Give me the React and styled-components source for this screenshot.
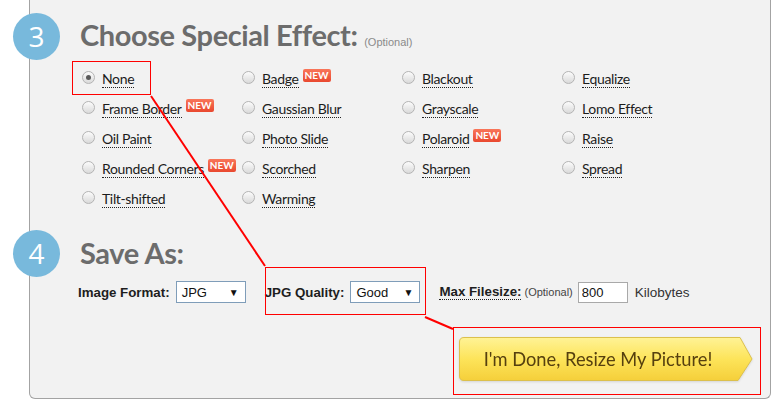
import React from "react";
import styled, { createGlobalStyle } from "styled-components";

const GlobalStyle = createGlobalStyle`
  html, body {
    margin: 0;
    padding: 0;
    background: #ffffff;
  }
  body {
    font-family: "Liberation Sans", Arial, sans-serif;
    width: 779px;
    height: 404px;
    overflow: hidden;
  }
`;

const effects = [
  { name: "None", checked: true },
  { name: "Badge", isNew: true },
  { name: "Blackout" },
  { name: "Equalize" },
  { name: "Frame Border", isNew: true },
  { name: "Gaussian Blur" },
  { name: "Grayscale" },
  { name: "Lomo Effect" },
  { name: "Oil Paint" },
  { name: "Photo Slide" },
  { name: "Polaroid", isNew: true },
  { name: "Raise" },
  { name: "Rounded Corners", isNew: true },
  { name: "Scorched" },
  { name: "Sharpen" },
  { name: "Spread" },
  { name: "Tilt-shifted" },
  { name: "Warming" },
];

function App() {
  return (
    <Page>
      <GlobalStyle />
      <Panel>
        <Section>
          <StepBadge top={-2}>3</StepBadge>
          <Heading gap={0}>
            Choose Special Effect: <Optional>(Optional)</Optional>
          </Heading>
          <EffectGrid>
            {effects.map((fx) => (
              <Option key={fx.name}>
                <Radio checked={fx.checked} />
                <OptionLabel>{fx.name}</OptionLabel>
                {fx.isNew && <NewTag>NEW</NewTag>}
              </Option>
            ))}
          </EffectGrid>
        </Section>

        <Section>
          <StepBadge top={-3}>4</StepBadge>
          <Heading gap={20}>Save As:</Heading>
          <FormRow>
            <FieldLabel>Image Format:</FieldLabel>
            <FakeSelect>
              <span>JPG</span>
              <Arrow>▼</Arrow>
            </FakeSelect>
            <FieldLabel>JPG Quality:</FieldLabel>
            <FakeSelect>
              <span>Good</span>
              <Arrow>▼</Arrow>
            </FakeSelect>
            <FieldLabel dotted>Max Filesize:</FieldLabel>
            <SmallNote>(Optional)</SmallNote>
            <SizeInput defaultValue="800" />
            <Unit>Kilobytes</Unit>
          </FormRow>
        </Section>

        <ButtonRow>
          <DoneButton>
            <ButtonShape viewBox="0 0 294 44" width="294" height="44">
              <defs>
                <linearGradient id="btnFill" x1="0" y1="0" x2="0" y2="1">
                  <stop offset="0" stopColor="#fff396" />
                  <stop offset="0.5" stopColor="#fde45a" />
                  <stop offset="1" stopColor="#f5cf3a" />
                </linearGradient>
              </defs>
              <path
                d="M5,0.5 H281 L293,22 L279,43.5 H5 Q0.5,43.5 0.5,39 V5 Q0.5,0.5 5,0.5 Z"
                fill="url(#btnFill)"
                stroke="#dcc04c"
              />
            </ButtonShape>
            <ButtonText>I'm Done, Resize My Picture!</ButtonText>
          </DoneButton>
        </ButtonRow>
      </Panel>

      <Annotations viewBox="0 0 779 404" width="779" height="404">
        <rect x="72.5" y="61.5" width="78" height="33" fill="none" stroke="#f00" strokeWidth="1" />
        <rect x="265.5" y="267.5" width="160" height="47" fill="none" stroke="#f00" strokeWidth="1" />
        <rect x="453.5" y="327.5" width="307" height="67" fill="none" stroke="#f00" strokeWidth="1" />
        <line x1="151" y1="96" x2="265" y2="266" stroke="#f00" strokeWidth="2" />
        <line x1="425" y1="317" x2="453" y2="329" stroke="#f00" strokeWidth="2" />
      </Annotations>
    </Page>
  );
}

export default App;

const Page = styled.div`
  position: relative;
  width: 779px;
  height: 404px;
`;

const Panel = styled.div`
  margin-left: 29px;
  width: 742px;
  box-sizing: border-box;
  background: #f2f2f2;
  border: 1px solid #a3a3a3;
  border-top: none;
  border-radius: 0 0 6px 6px;
  padding: 15px 0 17px;
`;

const Section = styled.div`
  position: relative;
`;

const StepBadge = styled.div`
  position: absolute;
  left: -17px;
  top: ${(p) => p.top}px;
  width: 47px;
  height: 47px;
  border-radius: 50%;
  background: #78b9dc;
  color: #ffffff;
  font-family: "Open Sans", "Liberation Sans", sans-serif;
  font-size: 28px;
  line-height: 47px;
  text-align: center;
`;

const Heading = styled.h2`
  margin: ${(p) => p.gap}px 0 0 50px;
  height: 40px;
  line-height: 40px;
  font-family: Lato, "Open Sans", sans-serif;
  font-weight: 700;
  font-size: 29px;
  color: #6c6c6c;
  letter-spacing: -0.4px;
  white-space: nowrap;
`;

const Optional = styled.span`
  font-family: "Liberation Sans", Arial, sans-serif;
  font-weight: 400;
  font-size: 11px;
  color: #8a8a8a;
  letter-spacing: 0;
`;

const EffectGrid = styled.div`
  display: grid;
  grid-template-columns: repeat(4, 160px);
  grid-auto-rows: 30px;
  margin: 8px 0 0 52px;
`;

const Option = styled.div`
  display: flex;
  align-items: center;
  white-space: nowrap;
`;

const Radio = styled.span`
  position: relative;
  flex: none;
  width: 11px;
  height: 11px;
  border-radius: 50%;
  border: 1px solid #b4b4b4;
  background: linear-gradient(#fcfcfc, #dadada);
  margin-top: -1px;
  margin-right: 7px;

  &::after {
    content: "";
    display: ${(p) => (p.checked ? "block" : "none")};
    position: absolute;
    left: 3px;
    top: 3px;
    width: 5px;
    height: 5px;
    border-radius: 50%;
    background: #5a5a5a;
  }
`;

const OptionLabel = styled.span`
  font-family: Lato, "Open Sans", sans-serif;
  font-size: 14px;
  letter-spacing: -0.35px;
  color: #1c1c1c;
  line-height: 16px;
  border-bottom: 1px dotted #222;
  margin-top: 3px;
`;

const NewTag = styled.span`
  margin-left: 4px;
  margin-top: -5px;
  padding: 0 2px;
  height: 13px;
  line-height: 13px;
  border-radius: 2px;
  background: linear-gradient(#f9765a, #e9482f);
  color: #ffffff;
  font-family: Lato, "Liberation Sans", sans-serif;
  font-size: 10px;
  font-weight: 700;
`;

const FormRow = styled.div`
  display: flex;
  align-items: center;
  margin: 8px 0 0 48px;
  height: 22px;
  white-space: nowrap;
`;

const FieldLabel = styled.span`
  font-family: "Liberation Sans", Arial, sans-serif;
  font-weight: 700;
  font-size: 13.3px;
  color: #1e1e1e;
  margin-right: 6px;
  ${(p) => p.dotted && "border-bottom: 1px dotted #222; line-height: 14px; margin-right: 3px;"}
`;

const FakeSelect = styled.div`
  display: flex;
  align-items: center;
  justify-content: space-between;
  box-sizing: border-box;
  width: 70px;
  height: 22px;
  padding: 0 6px 0 5px;
  margin-right: 19px;
  background: #ffffff;
  border: 1px solid #7f9db9;
  font-family: "Liberation Sans", Arial, sans-serif;
  font-size: 13px;
  color: #111;
`;

const Arrow = styled.span`
  font-size: 10px;
  color: #111;
`;

const SmallNote = styled.span`
  font-family: "Liberation Sans", Arial, sans-serif;
  font-size: 11px;
  color: #444;
  margin-right: 5px;
`;

const SizeInput = styled.input`
  box-sizing: border-box;
  width: 50px;
  height: 21px;
  padding: 0 3px;
  border: 1px solid #a9a9a9;
  background: #ffffff;
  font-family: "Liberation Sans", Arial, sans-serif;
  font-size: 13px;
  color: #111;
  margin-right: 7px;
  outline: none;
`;

const Unit = styled.span`
  font-family: "Liberation Sans", Arial, sans-serif;
  font-size: 13.5px;
  color: #333;
`;

const ButtonRow = styled.div`
  display: flex;
  margin: 34px 0 0 429px;
`;

const DoneButton = styled.div`
  position: relative;
  width: 294px;
  height: 44px;
  display: flex;
  align-items: center;
  justify-content: center;
  padding-right: 16px;
  box-sizing: border-box;
  filter: drop-shadow(0 1px 1px rgba(0, 0, 0, 0.12));
`;

const ButtonShape = styled.svg`
  position: absolute;
  left: 0;
  top: 0;
`;

const ButtonText = styled.span`
  position: relative;
  font-family: Lato, "Open Sans", sans-serif;
  font-size: 18.3px;
  color: #56400f;
  white-space: nowrap;
`;

const Annotations = styled.svg`
  position: absolute;
  left: 0;
  top: 0;
  pointer-events: none;
`;
